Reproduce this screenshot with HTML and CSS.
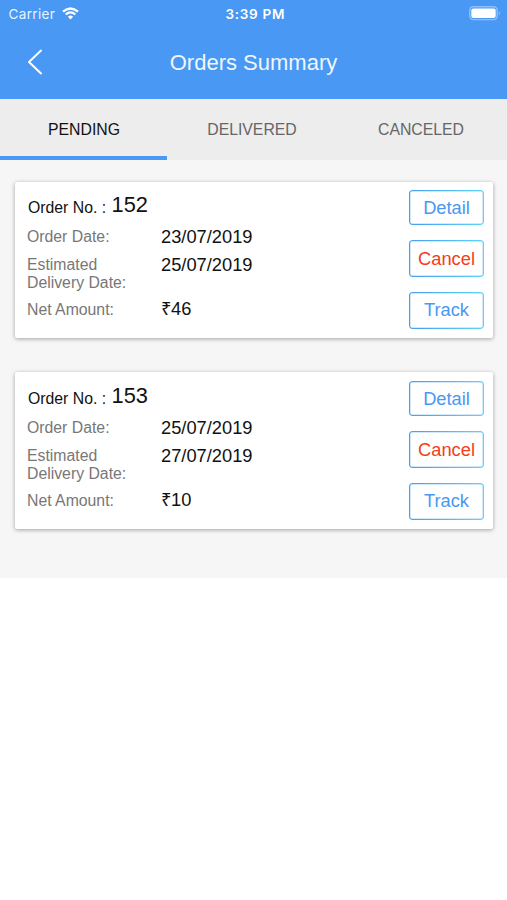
FILE: index.html
```html
<!DOCTYPE html>
<html lang="en">
<head>
<meta charset="utf-8">
<title>Orders Summary</title>
<link rel="stylesheet" href="styles.css">
</head>
<body>
<header class="header">
  <div class="status">
    <div class="network">
      <span class="carrier">Carrier</span>
      <svg class="wifi" width="17" height="13" viewBox="0 0 17 13" fill="none" stroke="#fff" stroke-width="2.3">
        <path d="M1 4.700Q8.500-1.700 16 4.700M3.700 7.500Q8.500 3.300 13.300 7.500"/>
        <path d="M5.900 9.700Q8.500 7.500 11.100 9.700L8.500 12.500Z" fill="#fff" stroke="none"/>
      </svg>
    </div>
    <span class="time">3:39 PM</span>
    <svg class="battery" width="32" height="15" viewBox="0 0 32 15">
      <rect x=".8" y=".8" width="27.400" height="12.800" rx="3.500" fill="none" stroke="#8fc0fa" stroke-width="1.400"/>
      <rect x="2.300" y="2.500" width="24.400" height="9.400" rx="2" fill="#fff"/>
      <path d="M29.800 5.200Q32.200 7.200 29.800 9.200Z" fill="#8fc0fa"/>
    </svg>
  </div>
  <div class="nav">
    <svg class="back" width="16" height="28" viewBox="0 0 16 28" fill="none" stroke="#fff" stroke-width="2" stroke-linecap="round" stroke-linejoin="round">
      <path d="M14 2.500L2 14L14 25.500"/>
    </svg>
    <h1 class="title">Orders Summary</h1>
  </div>
</header>
<nav class="tabs">
  <div class="tab active">PENDING</div>
  <div class="tab">DELIVERED</div>
  <div class="tab">CANCELED</div>
</nav>
<main class="orders">
  <article class="card">
    <div class="info">
      <div class="number">Order No. : <span class="id">152</span></div>
      <dl class="fields">
        <dt>Order Date:</dt><dd>23/07/2019</dd>
        <dt>Estimated<br>Delivery Date:</dt><dd>25/07/2019</dd>
        <dt>Net Amount:</dt><dd class="amount">₹46</dd>
      </dl>
    </div>
    <div class="actions">
      <button class="btn detail">Detail</button>
      <button class="btn cancel">Cancel</button>
      <button class="btn track">Track</button>
    </div>
  </article>
  <article class="card">
    <div class="info">
      <div class="number">Order No. : <span class="id">153</span></div>
      <dl class="fields">
        <dt>Order Date:</dt><dd>25/07/2019</dd>
        <dt>Estimated<br>Delivery Date:</dt><dd>27/07/2019</dd>
        <dt>Net Amount:</dt><dd class="amount">₹10</dd>
      </dl>
    </div>
    <div class="actions">
      <button class="btn detail">Detail</button>
      <button class="btn cancel">Cancel</button>
      <button class="btn track">Track</button>
    </div>
  </article>
</main>
</body>
</html>
```
FILE: styles.css
```css
* { box-sizing: border-box; }
body {
  margin: 0;
  background: #fff;
  color: #111;
  font-family: "Liberation Sans", Arial, sans-serif;
}
.header {
  height: 98.5px;
  background: #4898f4;
  color: #fff;
}
.status {
  display: grid;
  grid-template-columns: 1fr auto 1fr;
  align-items: center;
  height: 28px;
  padding: 0 6px 0 8.500px;
  font-family: Inter, sans-serif;
  font-size: 13.5px;
}
.network {
  display: flex;
  align-items: center;
  gap: 7px;
}
.carrier { letter-spacing: .35px; color: #eaf3fe; }
.wifi { margin-top: -2px; }
.time { margin-left: 1px; font-size: 13.500px; font-weight: 600; letter-spacing: .700px; }
.battery { justify-self: end; margin-top: -1px; }
.nav {
  display: grid;
  grid-template-columns: 54px 1fr 54px;
  align-items: center;
  height: 68px;
}
.back { margin-left: 27px; }
.title {
  margin: 0;
  padding-top: 1px;
  font-size: 22px;
  font-weight: 400;
  text-align: center;
  color: #eff6fe;
}
.tabs {
  display: grid;
  grid-template-columns: 167px 170px 170px;
  height: 61.5px;
  background: #ededed;
}
.tab {
  height: 61.5px;
  border-bottom: 4px solid transparent;
  font-size: 15.800px;
  line-height: 61px;
  text-align: center;
  color: #666;
}
.tab:last-child { padding-right: 2px; }
.tab.active { padding-left: 1px; color: #111; border-color: #4898f4; }
.orders {
  display: flex;
  flex-direction: column;
  gap: 34px;
  height: 417.5px;
  padding: 22px 14px 0 15px;
  background: #f6f6f6;
}
.card {
  display: flex;
  justify-content: space-between;
  height: 156.400px;
  padding: 0 9px 0 12px;
  border-radius: 2px;
  background: #fff;
  box-shadow: 0 1px 4px rgba(0, 0, 0, .35);
}
.card + .card { padding-top: .700px; }
.number {
  height: 46px;
  padding-left: 1px;
  font-size: 15.800px;
  line-height: 52px;
}
.id { margin-left: 1px; font-size: 21.800px; line-height: 1; vertical-align: 1px; }
.fields {
  display: grid;
  grid-template-columns: 134px auto;
  grid-template-rows: 27.500px 45px 20px;
  margin: 0;
}
dt { font-size: 15.800px; line-height: 18px; color: #777; }
dd { margin: 0; font-size: 18.300px; line-height: 18px; }
.amount { margin-top: -1px; }
.actions {
  display: flex;
  flex-direction: column;
  gap: 15px;
  padding-top: 8px;
}
.btn {
  width: 75px;
  height: 37px;
  padding: 0;
  border: 1px solid transparent;
  border-radius: 4px;
  background:
    linear-gradient(#fff, #fff) padding-box,
    linear-gradient(90deg, #479df0, #5cd6f5) border-box;
  box-shadow: inset 0 0 0 .500px #a3d6f8;
  color: #4898f4;
  font: 18.300px "Liberation Sans", Arial, sans-serif;
}
.detail { height: 35px; }
.cancel { color: #f63b20; }
.track { padding-bottom: 1px; }
```
